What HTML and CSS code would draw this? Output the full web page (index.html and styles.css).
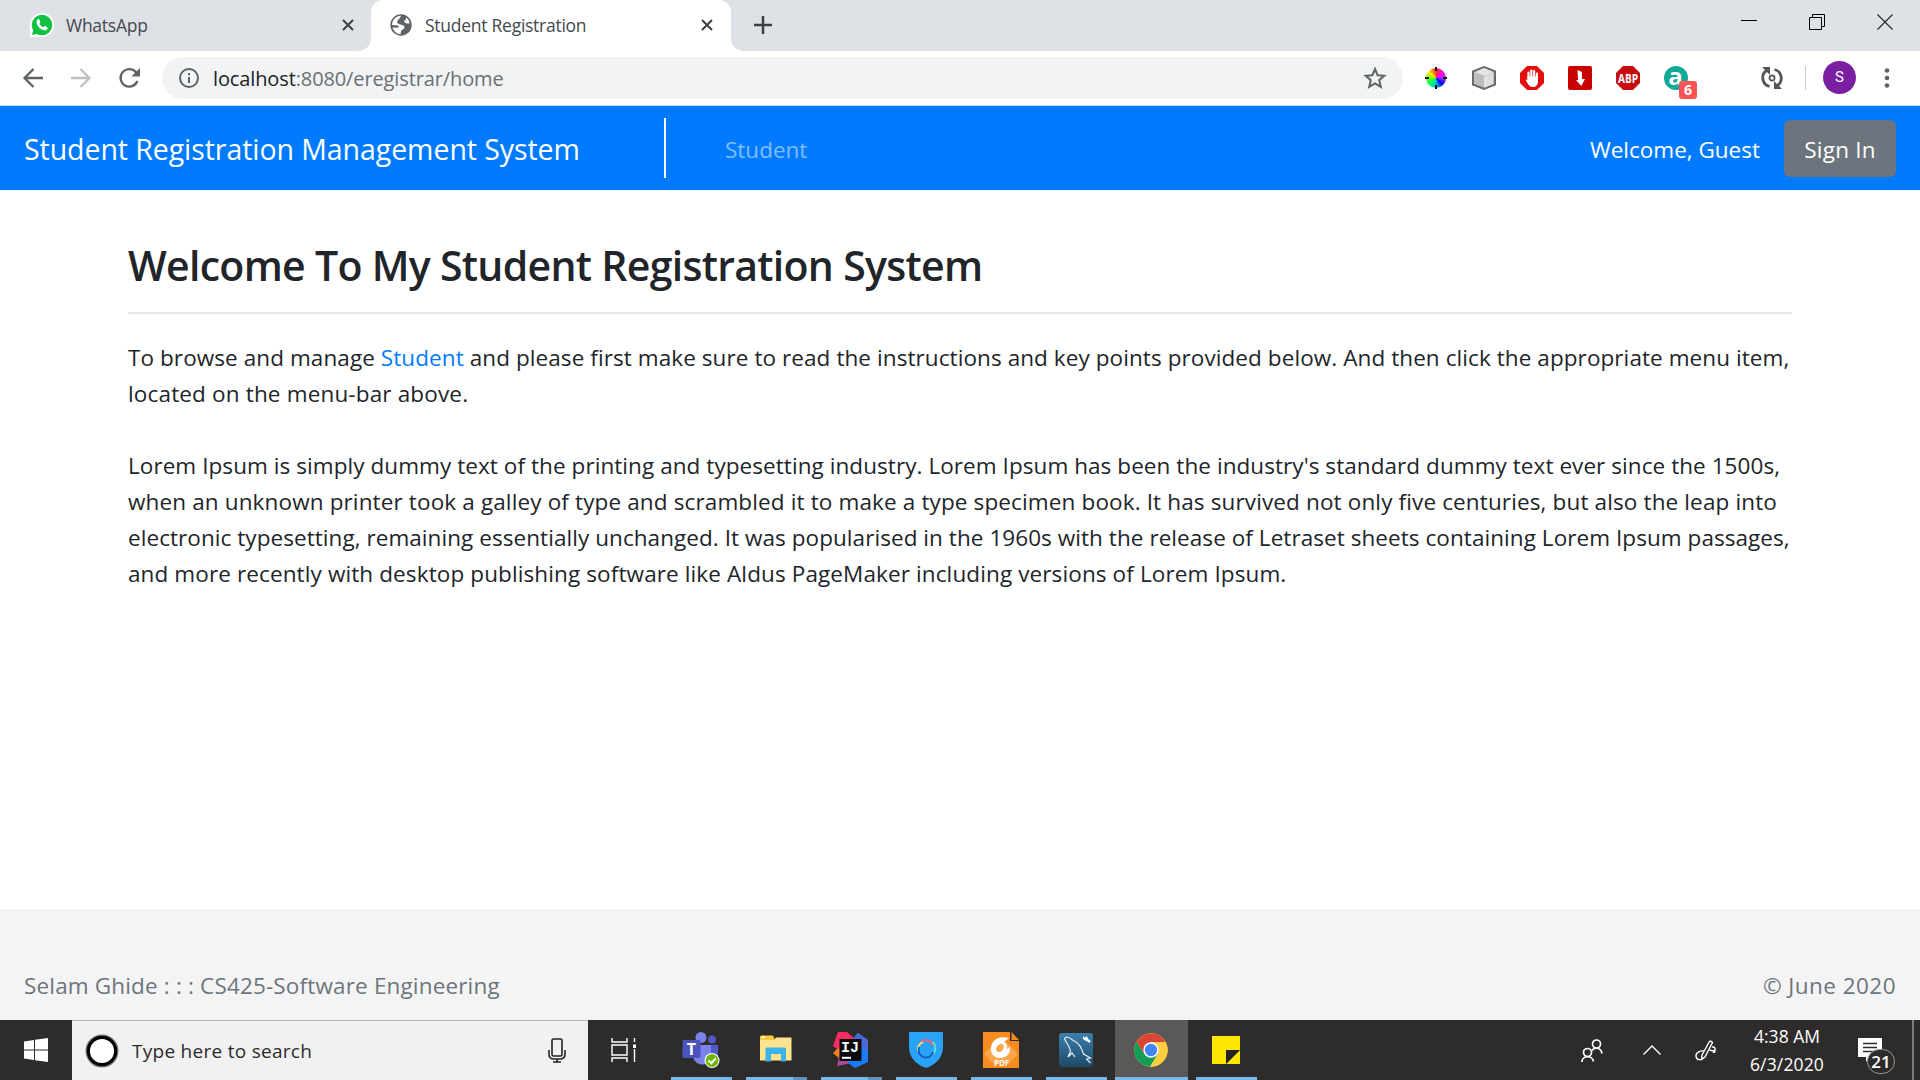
FILE: index.html
```html
<!DOCTYPE html>
<html lang="en">
<head>
<meta charset="utf-8">
<title>Student Registration</title>
<link rel="stylesheet" href="styles.css">
</head>
<body>
<div class="tabstrip">
  <div class="tab">
    <svg class="wa" viewBox="0 0 24 24"><path d="M0 24V12A12 12 0 1 1 12 24Z" fill="#fff"/><circle cx="12" cy="12" r="10.3" fill="#12c143"/><path d="M2 22l1.500-6 5 4.500z" fill="#12c143"/><path d="M7 7.200c1.200-1.600 2-1.200 2.500-.2l.8 1.900c.2.700-.9 1.300-.9 1.900.8 1.600 2.100 2.800 3.800 3.500.7.100 1.200-1.300 1.800-1.200l2.200 1.100c.8.500.2 2.200-.8 2.700-4.500 2-11.600-5.200-9.400-9.700z" fill="#fff"/></svg>
    <span class="title t-wa">WhatsApp</span>
    <svg class="x" viewBox="0 0 12 12"><path d="M1 1l10 10M11 1L1 11" stroke="#3c4043" stroke-width="2"/></svg>
  </div>
  <div class="tab active">
    <svg class="globe" viewBox="0 0 22 22"><circle cx="11" cy="11" r="10.700" fill="#5f6368"/><path d="M11 1.800C10 5 7.500 5.500 7.200 8c0 2.500 4 2.200 5.800 3.200 2 1.200 2.200 3-.4 4.300-1.600.8-1.800 3-2 4.800C6.500 20 3.500 17 2.500 13.500l4.800.3C9 13.800 9.500 12 7.500 11.600L2 11C2 6 6 2 11 1.800zM16 3.500c1 .6 3 2.500 3.700 5.500-2.200 1-3.700.4-5-.6-1.500-1.200-.2-1.800 1-2.700z" fill="#fff"/></svg>
    <span class="title t-sr">Student Registration</span>
    <svg class="x" viewBox="0 0 12 12"><path d="M1 1l10 10M11 1L1 11" stroke="#3c4043" stroke-width="2"/></svg>
  </div>
  <svg class="plus" viewBox="0 0 18 18"><path d="M9 0v18M0 9h18" stroke="#3c4043" stroke-width="2.500"/></svg>
  <div class="winctl">
    <svg viewBox="0 0 16 16"><path d="M0 6.500h16" stroke="#000"/></svg>
    <svg viewBox="0 0 16 16"><path d="M.5 3.500h12v12H.5zM3.500 3.500v-3h12v12h-3" fill="none" stroke="#000"/></svg>
    <svg viewBox="0 0 16 16"><path d="M.5.500l15 15M15.500.500l-15 15" stroke="#222" stroke-width="1.100"/></svg>
  </div>
</div>
<div class="toolbar">
  <svg class="back" viewBox="0 0 20 20"><path d="M20 10H2M10.500 1L1.500 10l9 9" fill="none" stroke="#5f6368" stroke-width="2.300"/></svg>
  <svg class="fwd" viewBox="0 0 20 20"><path d="M0 10h18M9.500 1l9 9-9 9" fill="none" stroke="#bdbfc1" stroke-width="2.300"/></svg>
  <svg class="reload" viewBox="0 0 21 20"><path d="M17.500 5A8.700 8.700 0 1 0 18.400 13" fill="none" stroke="#5f6368" stroke-width="2.300"/><path d="M21 0v8.500h-8.500z" fill="#5f6368"/></svg>
  <div class="omnibox">
    <svg class="info" viewBox="0 0 20 20"><circle cx="10" cy="10" r="9" fill="none" stroke="#5f6368" stroke-width="2"/><path d="M10 9v6M10 5v2.200" stroke="#5f6368" stroke-width="2"/></svg>
    <span class="url"><b class="host">localhost</b>:8080/eregistrar/home</span>
    <svg class="star" viewBox="0 0 22 22"><path d="M11 2l2.600 6.200 6.700.6-5.100 4.400 1.600 6.600L11 16.300l-5.800 3.500 1.600-6.600L1.700 8.800l6.700-.6z" fill="none" stroke="#5f6368" stroke-width="2"/></svg>
  </div>
  <div class="exts">
    <div class="wheel-box"><div class="wheel"></div><svg viewBox="0 0 24 24"><path d="M12 1v4M12 19v4M1 12h4M19 12h4" stroke="#111" stroke-width="2"/></svg></div>
    <svg viewBox="0 0 24 24"><path d="M12 1l11 4.500v13l-11 4.500L1 18.500v-13z" fill="#c4c4c4" stroke="#6a6a6a" stroke-width="2"/><path d="M12 2l9.500 4-7.500 4L3 6z" fill="#e4e4e4"/><path d="M3 7l10 4v10.500L3 17.500z" fill="#bdbdbd"/><path d="M21 7l-8 4v10.500l8-3.500z" fill="#ddd"/><path d="M13 11v10" stroke="#fff"/></svg>
    <svg viewBox="0 0 24 24"><path d="M7 0h10l7 7v10l-7 7H7l-7-7V7z" fill="#e40d0d"/><path d="M8.500 12V6.500M11.300 11V4.500M14.100 11V5M16.900 13V7.500" stroke="#fff" stroke-width="2.200" stroke-linecap="round"/><path d="M7.400 10.500H18V15c0 4-2 6-5.200 6-3 0-4.300-2-6.600-6-.7-1.500.7-2 1.200-1z" fill="#fff"/></svg>
    <svg viewBox="0 0 24 24"><rect width="24" height="24" rx="2" fill="#c80000"/><path d="M9.500 4l4.500 2v7h3l-3.700 7-5.300-6h2z" fill="#fff"/></svg>
    <svg viewBox="0 0 24 24"><path d="M7 0h10l7 7v10l-7 7H7l-7-7V7z" fill="#c70d0d"/><text x="12" y="16.500" text-anchor="middle" textLength="20" lengthAdjust="spacingAndGlyphs" class="abp">ABP</text></svg>
    <div class="aext"><svg viewBox="0 0 24 24"><circle cx="12" cy="12" r="12" fill="#12a999"/><text x="11.500" y="19" text-anchor="middle" class="aletter">a</text></svg><span class="badge">6</span></div>
  </div>
  <svg class="sync" viewBox="0 0 22 22"><g fill="none" stroke="#555" stroke-width="2.800"><path d="M5.500 3.500A9 9 0 0 0 8.500 19.500M16.500 18.500A9 9 0 0 0 13.500 2.500"/><circle cx="11" cy="11" r="2.600" stroke-width="1.700"/></g><path d="M1 0h8v8zM21 22h-8v-8z" fill="#555"/></svg>
  <i class="sep"></i>
  <span class="avatar">S</span>
  <svg class="menu" viewBox="0 0 6 20"><g fill="#5f6368"><circle cx="3" cy="2.500" r="2.300"/><circle cx="3" cy="10" r="2.300"/><circle cx="3" cy="17.500" r="2.300"/></g></svg>
</div>
<nav class="navbar">
  <span class="brand">Student Registration Management System</span>
  <i class="divider"></i>
  <span class="navlink">Student</span>
  <span class="welcome">Welcome, Guest</span>
  <span class="signin">Sign In</span>
</nav>
<main>
  <h1>Welcome To My Student Registration System</h1>
  <hr>
  <p>
    <span class="l l1">To browse and manage <a>Student</a> and please first make sure to read the instructions and key points provided below. And then click the appropriate menu item,</span>
    <span class="l l2">located on the menu-bar above.</span>
  </p>
  <p>
    <span class="l l3">Lorem Ipsum is simply dummy text of the printing and typesetting industry. Lorem Ipsum has been the industry's standard dummy text ever since the 1500s,</span>
    <span class="l l4">when an unknown printer took a galley of type and scrambled it to make a type specimen book. It has survived not only five centuries, but also the leap into</span>
    <span class="l l5">electronic typesetting, remaining essentially unchanged. It was popularised in the 1960s with the release of Letraset sheets containing Lorem Ipsum passages,</span>
    <span class="l l6">and more recently with desktop publishing software like Aldus PageMaker including versions of Lorem Ipsum.</span>
  </p>
</main>
<footer><span class="author">Selam Ghide : : : CS425-Software Engineering</span><span class="copy">© June 2020</span></footer>
<div class="taskbar">
  <div class="start"><svg viewBox="0 0 24 24"><path d="M0 3.400l10-1.400v9.500H0zM11 1.800L24 0v11.500H11zM0 12.500h10V22L0 20.600zM11 12.500h13V24l-13-1.800z" fill="#fff"/></svg></div>
  <div class="search">
    <svg class="ring" viewBox="0 0 34 34"><circle cx="17" cy="17" r="15.500" fill="none" stroke="#777" stroke-width="2"/><circle cx="17" cy="17" r="13.700" fill="#fff" stroke="#000" stroke-width="3.200"/></svg>
    <span class="st">Type here to search</span>
    <svg class="mic" viewBox="0 0 18 25"><g fill="none" stroke="#222" stroke-width="1.600"><rect x="4" y="1" width="10" height="17" rx="1.500"/><path d="M1 12v4q0 5 5 5h6q5 0 5-5v-4M9 21v3M5 24h8"/></g></svg>
  </div>
  <svg class="tv" viewBox="0 0 25 24"><path d="M1 0v4h15V0M1 7h15v10H1zM1 24v-4h15v4M23.500 0v4M23.500 11v13" fill="none" stroke="#fff" stroke-width="1.400"/><rect x="22" y="6.500" width="3" height="3.500" fill="#fff"/></svg>
  <div class="apps">
    <div class="app"><svg viewBox="0 0 38 36"><circle cx="19" cy="5.500" r="5.500" fill="#7b83eb"/><circle cx="30" cy="7.500" r="4" fill="#5059c9"/><path d="M24 13h12v11q0 6-7 6h-5z" fill="#5059c9"/><path d="M11 13h18v12c0 10-16 10-18 0z" fill="#7b83eb"/><rect x=".5" y="8" width="18" height="18" rx="1.500" fill="#4b53bc"/><text x="9.500" y="22.500" text-anchor="middle" class="teams">T</text><circle cx="30" cy="28.500" r="7.500" fill="#fff"/><circle cx="30" cy="28.500" r="6.400" fill="#6bb700"/><path d="M26.500 28.500l2.700 2.700 4.700-5" fill="none" stroke="#fff" stroke-width="2"/></svg></div>
    <div class="app grouped"><svg viewBox="0 0 38 36"><path d="M3 5q0-1.500 1.500-1.500H16l2 4.500H3z" fill="#ffc83d"/><path d="M4.500 5H8" stroke="#fff" stroke-width="1.500"/><path d="M3 8h14l2-2.500h15.500v23H3z" fill="#ffe48f"/><path d="M8.500 29.500V17q0-1.500 1.500-1.500h17.500q1.500 0 1.500 1.500v12.500h-5V22H14v7.500z" fill="#3bb2e8"/></svg></div>
    <div class="app grouped"><svg viewBox="0 0 38 36"><path d="M6 0h9l8 7-9 22H6L10 20 1 14z" fill="#fc2d63"/><path d="M1 21l5-5 6 6-4 5z" fill="#f58220"/><path d="M5 34l3-14h12v11z" fill="#aa4a9a"/><path d="M26 1l10 7v22l-13 6-7-5 3-22z" fill="#167dff"/><path d="M19 9l7-8 10 7v11z" fill="#4c68d7"/><rect x="7.500" y="7" width="22" height="22" fill="#0b0b0b"/><text x="9" y="19.500" class="ij">IJ</text><path d="M10 25.800h9" stroke="#fff" stroke-width="2"/></svg></div>
    <div class="app"><svg viewBox="0 0 38 36"><path d="M2 0h34v15c0 11-8 18-17 21C10 33 2 26 2 15z" fill="#29a3f7"/><g fill="none" stroke-width="2"><path d="M11 19a8 8 0 0 1 5-9" stroke="#ffd27a"/><path d="M14 9.500a8 8 0 0 1 12 4" stroke="#f0616d"/><path d="M26 10a9 9 0 0 1-1 13" stroke="#5ce0d0"/><path d="M12 15c-3 12 12 14 14 5" stroke="#0b62c4"/></g></svg></div>
    <div class="app"><svg viewBox="0 0 38 36"><path d="M1 0h27v9h9v27H1z" fill="#f68b1f"/><path d="M29.500 0L37 8h-7.500z" fill="#f68b1f"/><path d="M2 22L19 5l17 17-9 9H11z" fill="#f9a64d"/><path d="M27 6C15 3 9 9 9 17c0 6 4 9 9 9 7 0 11-5 10-12-1 2-2 3-3 3 1-4-1-6-3-7zM18 12c4-1 5 4 2 7-3 2-6 1-6-2 0-2 2-4 4-5z" fill="#fff" fill-rule="evenodd"/><text x="19.500" y="33.500" text-anchor="middle" textLength="15" lengthAdjust="spacingAndGlyphs" class="pdf">PDF</text></svg></div>
    <div class="app"><svg viewBox="0 0 38 36"><defs><linearGradient id="g" x2="0" y2="1"><stop stop-color="#3a7fae"/><stop offset="1" stop-color="#1f4a68"/></linearGradient></defs><rect x="2" y="1" width="34" height="34" rx="3" fill="url(#g)"/><path d="M11 25l2.500-6c-1-5-4-8-6-12 1-3 5-2 8 1 7 3 9 8 11 14l7 4-4 1 4 4M11 25l4-4 3 4" fill="none" stroke="#e6eef4" stroke-width="1.200"/><path d="M28 6l5 4" stroke="#fff" stroke-width="2.500"/><path d="M26 4v3l3 2 2-2-1-3-2 2z" fill="#fff"/></svg></div>
    <div class="app on"><svg viewBox="0 0 38 36"><circle cx="19" cy="18" r="16.700" fill="#fc4"/><path d="M4.500 9.700A16.700 16.700 0 0 1 33.500 10H19l-7 12z" fill="#db4437"/><path d="M4.500 9.700A16.700 16.700 0 0 0 18 34.700l8-12.700H12z" fill="#0f9d58"/><path d="M19 10h14.500A16.700 16.700 0 0 1 18 34.700L26 22z" fill="#ffcd40"/><circle cx="19" cy="18" r="7.700" fill="#fff"/><circle cx="19" cy="18" r="6.200" fill="#4285f4"/></svg></div>
    <div class="app"><svg viewBox="0 0 38 36"><path d="M5 4h28v14L19 32H5z" fill="#ffe600"/><path d="M33 18v14H19z" fill="#ffe600"/><path d="M19 18h14L19 32z" fill="#222"/></svg></div>
  </div>
  <div class="tray">
    <svg class="people" viewBox="0 0 22 23"><g fill="none" stroke="#fff" stroke-width="1.700"><circle cx="15.500" cy="5" r="4"/><circle cx="6.500" cy="13.500" r="4"/><path d="M11 11.500c2-3.500 9-3.500 10 3M1 23c0-7 10.500-7 11.500-.5"/></g></svg>
    <svg class="chev" viewBox="0 0 18 10"><path d="M.5 9.500L9 1l8.500 8.500" fill="none" stroke="#fff" stroke-width="1.400"/></svg>
    <svg class="pen" viewBox="0 0 21 21"><path d="M7 15L14.500 1.500q2-1 3 1L10 17l-3.500 2.500zM9 11c-4-.5-8.500 1.500-8 5.500 1 4.500 5 3.500 8 1M17 7c3-.5 4 2 2.500 3.500-1.500 1-4-.5-5-.5M19 10c2 1 1 3-1 2" fill="none" stroke="#fff" stroke-width="1.400"/></svg>
    <div class="clock"><span>4:38 AM</span><span class="date">6/3/2020</span></div>
    <div class="notif"><svg viewBox="0 0 24 24"><path d="M0 0h24v19H12l-4 5v-5H0z" fill="#fff"/><path d="M5 5.500h14M5 9.500h14M5 13.500h14" stroke="#2d2c2b" stroke-width="1.300"/></svg><span class="count">21</span></div>
    <i class="peek"></i>
  </div>
</div>
</body>
</html>
```
FILE: styles.css
```css
* { box-sizing: border-box; }
body { margin: 0; width: 1920px; height: 1080px; overflow: hidden; display: flex; flex-direction: column; background: #fff; color: #212529; font-family: "Open Sans", "Noto Sans", sans-serif; }
svg { display: block; flex: none; overflow: visible; }
span { white-space: nowrap; }

/* Tab strip */
.tabstrip { height: 51px; flex: none; display: flex; background: #dee1e6; }
.tab { width: 371px; display: flex; align-items: center; padding: 0 17px 2px 30px; }
.tab.active { width: 360px; padding: 0 18px 2px 19px; background: #fff; border-radius: 12px 12px 0 0; position: relative; }
.tab.active::before, .tab.active::after { content: ""; position: absolute; bottom: 0; width: 12px; height: 12px; }
.tab.active::before { left: -12px; background: radial-gradient(circle at 0 0, #dee1e6 11.5px, #fff 12px); }
.tab.active::after { right: -12px; background: radial-gradient(circle at 100% 0, #dee1e6 11.5px, #fff 12px); }
.title { flex: none; font-size: 17.5px; letter-spacing: -.26px; color: #45494d; }
.x { width: 12px; height: 12px; margin-left: auto; }
.wa { width: 24px; height: 24px; margin-right: 12px; }
.globe { width: 22px; height: 22px; margin-right: 13px; }
.plus { width: 18px; height: 18px; margin: 16px 0 0 23px; }
.winctl { margin-left: auto; display: flex; gap: 52px; padding: 14px 27px 0 0; }
.winctl svg { width: 16px; height: 16px; }

/* Toolbar */
.toolbar { height: 55px; flex: none; display: flex; align-items: center; padding: 0 30px 1px 23px; border-bottom: 1px solid #d5d7da; }
.back, .fwd { width: 20px; height: 20px; }
.fwd { margin-left: 28px; }
.reload { width: 21px; height: 20px; margin-left: 28px; }
.omnibox { margin-left: 22px; width: 1241px; height: 42px; border-radius: 21px; background: #f1f3f4; display: flex; align-items: center; padding: 0 17px; }
.info { width: 20px; height: 20px; }
.url { margin-left: 14px; padding-top: 1px; font-size: 20px; letter-spacing: -.12px; color: #6b6f73; }
.host { font-weight: 400; color: #202124; }
.star { width: 22px; height: 22px; margin-left: auto; }
.exts { display: flex; gap: 24px; margin-left: 21px; }
.exts svg { width: 24px; height: 24px; }
.wheel-box { display: grid; place-items: center; width: 24px; height: 24px; }
.wheel-box > * { grid-area: 1 / 1; }
.wheel { width: 20px; height: 20px; border-radius: 50%; background: conic-gradient(#f33, #f0f 60deg, #93f 90deg, #00f 135deg, #0cc 180deg, #0f6 230deg, #7f0 270deg, #fe0 310deg, #f33); }
.abp { font: bold 12px "Open Sans", sans-serif; fill: #fff; }
.aext { position: relative; }
.aletter { font: bold 24px "Open Sans", sans-serif; fill: #fff; }
.badge { position: absolute; left: 15px; top: 15px; width: 18px; height: 18px; border-radius: 3px; background: #ff5252; color: #fff; font: bold 14px/18px "Open Sans", sans-serif; text-align: center; }
.sync { width: 22px; height: 22px; margin-left: 73px; }
.sep { width: 1px; height: 24px; background: #c9cbce; margin-left: 22px; }
.avatar { width: 33px; height: 33px; border-radius: 50%; background: #7b1fa2; color: #fff; font: 15px/33px Roboto, sans-serif; text-align: center; margin-left: 17px; }
.menu { width: 6px; height: 20px; margin-left: auto; }

/* Site navigation */
.navbar { height: 84px; flex: none; display: flex; align-items: center; background: #007bff; color: #fff; padding: 0 24px; }
.brand { width: 556px; font-size: 28.5px; letter-spacing: -.065px; padding-top: 2px; }
.divider { width: 2px; height: 60px; background: #fff; margin-left: 84px; }
.navlink { margin-left: 59px; padding-top: 2px; font-size: 22.5px; color: #80bdff; }
.welcome { margin-left: auto; padding-top: 2px; font-size: 22.5px; }
.signin { width: 112px; height: 57px; border-radius: 6px; background: #6c757d; font-size: 22.5px; letter-spacing: .25px; line-height: 59px; text-align: center; margin-left: 24px; }

/* Page content */
main { flex: none; height: 719px; padding: 48px 128px 0; font-size: 22.5px; line-height: 36px; }
h1 { margin: 0; font-size: 41px; letter-spacing: -.7px; line-height: 54px; font-weight: 600; white-space: nowrap; }
hr { border: 0; border-top: 2px solid #e5e5e5; margin: 20px 0 26px; }
p { margin: 0 0 36px; }
.l { display: block; }
.l1 { letter-spacing: .08px; }
.l2 { letter-spacing: .16px; }
.l3 { letter-spacing: .065px; }
.l4 { letter-spacing: .134px; }
.l5 { letter-spacing: .06px; }
.l6 { letter-spacing: .115px; }
a { color: #007bff; }
footer { height: 111px; flex: none; background: #f4f4f4; display: flex; justify-content: space-between; padding: 59px 24px 0; color: #6c757d; font-size: 22.5px; line-height: 36px; }
.author { letter-spacing: .16px; }
.copy { letter-spacing: .45px; }

/* Taskbar */
.taskbar { height: 60px; flex: none; display: flex; background: #2d2c2a; color: #fff; }
.start { width: 72px; padding: 18px 24px; }
.start svg { width: 24px; height: 24px; }
.search { width: 516px; background: #f1f1f1; border-top: 1px solid #b9b9b9; display: flex; align-items: center; padding: 0 22px 0 13px; }
.ring { width: 34px; height: 34px; }
.st { margin-left: 13px; font-size: 19px; letter-spacing: .28px; color: #2b2b2b; }
.mic { width: 18px; height: 25px; margin-left: auto; }
.tv { width: 25px; height: 24px; margin: 18px 28px 0 23px; }
.apps { display: flex; }
.app { width: 75px; display: flex; flex-direction: column; align-items: center; justify-content: space-between; padding-top: 12px; }
.app svg { width: 38px; height: 36px; margin-right: 2px; }
.app::after { content: ""; width: 61px; height: 3px; background: #76b9ed; }
.app.grouped::after { background: linear-gradient(90deg, #76b9ed 47px, #5d93bd 47px); }
.app.on { width: 73px; margin: 0 1px; background: #5a5957; }
.app.on::after { width: 73px; }
.teams { font: bold 16px "Open Sans", sans-serif; fill: #fff; }
.ij { font: bold 15px "Liberation Mono", monospace; fill: #fff; }
.pdf { font: bold 8.5px "Open Sans", sans-serif; fill: #fff; }
.tray { margin-left: auto; display: flex; align-items: center; }
.people { width: 22px; height: 23px; margin-right: 40px; }
.chev { width: 18px; height: 10px; margin-right: 34px; }
.pen { width: 21px; height: 21px; }
.clock { width: 110px; display: flex; flex-direction: column; align-items: center; margin-left: 16px; margin-right: 1px; font-size: 17.5px; line-height: 28px; }
.date { letter-spacing: .15px; }
.notif { position: relative; margin-left: 15px; width: 24px; }
.notif svg { width: 24px; height: 24px; }
.count { position: absolute; left: 9px; top: 11px; width: 28px; height: 25px; border-radius: 13px; border: 1px solid #999; background: #2d2c2a; font: 600 17px/23px "Open Sans", sans-serif; text-align: center; }
.peek { width: 2px; height: 60px; background: #7d7c7b; margin: 0 6px 0 30px; }
```
